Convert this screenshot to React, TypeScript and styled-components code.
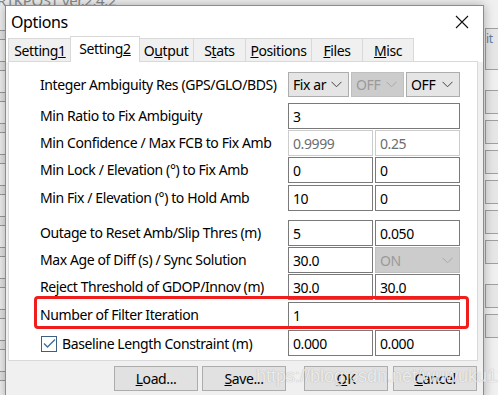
import styled, { createGlobalStyle, css } from "styled-components";

const GlobalStyle = createGlobalStyle`
  html, body {
    margin: 0;
    padding: 0;
  }
  body {
    width: 498px;
    height: 395px;
    overflow: hidden;
    background: #f0f0f0;
    font-family: "Noto Sans", "Open Sans", sans-serif;
    letter-spacing: -0.4px;
  }
`;

const Chevron = ({ color = "#444" }: { color?: string }) => (
    <svg width="11" height="7" viewBox="0 0 11 7">
        <path d="M0.5 0.8 L5.5 5.8 L10.5 0.8" fill="none" stroke={color} strokeWidth="1"/>
    </svg>
);

const tabs = [
    {label: "Setting", key: "1", after: "", w: 64},
    {label: "Setting", key: "2", after: "", w: 68, active: true},
    {label: "O", key: "u", after: "tput", w: 56},
    {label: "S", key: "t", after: "ats", w: 53},
    {label: "", key: "P", after: "ositions", w: 67},
    {label: "", key: "F", after: "iles", w: 52},
    {label: "", key: "M", after: "isc", w: 52},
];

export default function App() {
    return (
        <Desktop>
            <GlobalStyle/>
            <ParentTitle>RTKPOST ver.2.4.2</ParentTitle>
            <RightStrip>
                <StripBox $h={40}>it</StripBox>
                <StripBox $h={22} $mt={14}/>
                <StripBox $h={22}/>
                <StripBox $h={22}/>
                <StripBox $h={22}/>
                <StripBox $h={22}/>
                <StripBox $h={22}/>
                <StripBox $h={22} $mt={14}/>
                <StripBox $h={22}/>
            </RightStrip>
            <LeftStrip>
                {Array.from({length: 12}).map((_, i) => <LeftMark key={i}/>)}
            </LeftStrip>

            <Dialog>
                <TitleBar>
                    <Title>Options</Title>
                    <svg width="14" height="14" viewBox="0 0 14 14">
                        <path d="M1 1 L13 13 M13 1 L1 13" stroke="#111" strokeWidth="1.1"/>
                    </svg>
                </TitleBar>
                <TabStrip>
                    {tabs.map((t, i) => (
                        <Tab key={i} $w={t.w} $active={!!t.active}>
                            {t.label}<u>{t.key}</u>{t.after}
                        </Tab>
                    ))}
                </TabStrip>
                <PanelWrap>
                    <Panel>
                        <Row>
                            <Label>Integer Ambiguity Res (GPS/GLO/BDS)</Label>
                            <Controls>
                                <Select $w={61}>Fix ar<Chevron/></Select>
                                <Select $w={53} $disabled>OFF<Chevron color="#a8a8a8"/></Select>
                                <Select $w={54}>OFF<Chevron/></Select>
                            </Controls>
                        </Row>
                        <Row $mt={4}>
                            <Label>Min Ratio to Fix Ambiguity</Label>
                            <Controls>
                                <Field $w={172} defaultValue="3" readOnly/>
                            </Controls>
                        </Row>
                        <Row>
                            <Label>Min Confidence / Max FCB to Fix Amb</Label>
                            <Controls>
                                <Field $disabled defaultValue="0.9999" readOnly/>
                                <Field $disabled defaultValue="0.25" readOnly/>
                            </Controls>
                        </Row>
                        <Row>
                            <Label>Min Lock / Elevation (°) to Fix Amb</Label>
                            <Controls>
                                <Field defaultValue="0" readOnly/>
                                <Field defaultValue="0" readOnly/>
                            </Controls>
                        </Row>
                        <Row $mt={1}>
                            <Label>Min Fix / Elevation (°) to Hold Amb</Label>
                            <Controls>
                                <Field defaultValue="10" readOnly/>
                                <Field defaultValue="0" readOnly/>
                            </Controls>
                        </Row>
                        <Row $mt={8}>
                            <Label>Outage to Reset Amb/Slip Thres (m)</Label>
                            <Controls>
                                <Field defaultValue="5" readOnly/>
                                <Field defaultValue="0.050" readOnly/>
                            </Controls>
                        </Row>
                        <Row>
                            <Label>Max Age of Diff (s) / Sync Solution</Label>
                            <Controls>
                                <Field defaultValue="30.0" readOnly/>
                                <Select $w={85} $h={26} $disabled>ON<Chevron color="#a8a8a8"/></Select>
                            </Controls>
                        </Row>
                        <Row>
                            <Label>Reject Threshold of GDOP/Innov (m)</Label>
                            <Controls>
                                <Field defaultValue="30.0" readOnly/>
                                <Field defaultValue="30.0" readOnly/>
                            </Controls>
                        </Row>
                        <Row $mt={1} $marked>
                            <Label>Number of Filter Iteration</Label>
                            <Controls>
                                <Field $w={172} defaultValue="1" readOnly/>
                            </Controls>
                        </Row>
                        <Row $mt={1}>
                            <CheckLabel>
                                <CheckBox>
                                    <svg width="13" height="11" viewBox="0 0 13 11">
                                        <path d="M1 5.5 L4.5 9 L12 1.5" fill="none" stroke="#3f6f9f" strokeWidth="1.4"/>
                                    </svg>
                                </CheckBox>
                                Baseline Length Constraint (m)
                            </CheckLabel>
                            <Controls>
                                <Field defaultValue="0.000" readOnly/>
                                <Field defaultValue="0.000" readOnly/>
                            </Controls>
                        </Row>
                    </Panel>
                </PanelWrap>
                <Footer>
                    <Button><u>L</u>oad...</Button>
                    <Button $ml={4}><u>S</u>ave...</Button>
                    <Button $ml={18}><u>O</u>K</Button>
                    <Button $ml={5}><u>C</u>ancel</Button>
                </Footer>
            </Dialog>

            <Watermark>https://blog.csdn.net/wuwuku123</Watermark>
        </Desktop>
    );
}

const Desktop = styled.div`
    position: relative;
    width: 498px;
    height: 395px;
    overflow: hidden;
    background: #f0f0f0;
`;

const ParentTitle = styled.div`
    position: absolute;
    top: -10px;
    left: -3px;
    font-size: 15px;
    color: #8a8a8a;
`;

const RightStrip = styled.div`
    position: absolute;
    top: 28px;
    left: 485px;
    width: 13px;
    display: flex;
    flex-direction: column;
    gap: 6px;
`;

const StripBox = styled.div<{ $h: number; $mt?: number }>`
    height: ${p => p.$h}px;
    margin-top: ${p => p.$mt ?? 0}px;
    border: 1px solid #a0a0a0;
    border-right: none;
    background: #e6e6e6;
    font-size: 12px;
    color: #6a7a9a;
    line-height: 20px;
    overflow: hidden;
`;

const LeftStrip = styled.div`
    position: absolute;
    top: 30px;
    left: 0;
    width: 5px;
    display: flex;
    flex-direction: column;
    gap: 21px;
`;

const LeftMark = styled.div`
    height: 8px;
    border-top: 1px solid #9a9a9a;
    border-bottom: 1px solid #9a9a9a;
    background: #e4e4e4;
`;

const Dialog = styled.div`
    position: absolute;
    left: 5px;
    top: 5px;
    width: 479px;
    height: 395px;
    box-sizing: border-box;
    border: 1px solid #8c8c8c;
    background: #ffffff;
    box-shadow: 0 0 10px rgba(0, 0, 0, 0.3);
    display: flex;
    flex-direction: column;
`;

const TitleBar = styled.div`
    height: 31px;
    display: flex;
    align-items: center;
    justify-content: space-between;
    padding: 0 14px 0 5px;
`;

const Title = styled.span`
    font-size: 16px;
    color: #000;
`;

const TabStrip = styled.div`
    height: 25px;
    display: flex;
    align-items: flex-end;
    padding-left: 2px;
`;

const Tab = styled.div<{ $w: number; $active: boolean }>`
    box-sizing: border-box;
    width: ${p => p.$w}px;
    height: 24px;
    border: 1px solid #d9d9d9;
    border-bottom: none;
    margin-left: -1px;
    background: #f0f0f0;
    font-size: 14px;
    color: #000;
    display: flex;
    align-items: center;
    justify-content: center;

    &:first-child {
        margin-left: 0;
    }

    ${p => p.$active && css`
        height: 26px;
        width: ${p.$w + 2}px;
        margin-left: -2px;
        margin-right: -1px;
        background: #ffffff;
        position: relative;
        z-index: 1;
        padding-bottom: 3px;
    `}
`;

const PanelWrap = styled.div`
    background: #f0f0f0;
    padding: 0 5px 0 2px;
`;

const Panel = styled.div`
    height: 300px;
    box-sizing: border-box;
    border: 1px solid #d9d9d9;
    margin-top: -1px;
    background: #ffffff;
    padding: 10px 0 0 31px;
`;

const Row = styled.div<{ $mt?: number; $marked?: boolean }>`
    position: relative;
    display: grid;
    grid-template-columns: 248px 172px;
    width: 420px;
    height: 27px;
    margin-top: ${p => p.$mt ?? 0}px;

    ${p => p.$marked && css`
        &::after {
            content: "";
            position: absolute;
            top: -6px;
            left: -6px;
            right: -9px;
            bottom: 0;
            border: 3px solid #f01d1d;
            border-radius: 4px;
            pointer-events: none;
        }
    `}
`;

const Label = styled.div`
    font-size: 14px;
    color: #000;
    line-height: 26px;
    white-space: nowrap;
`;

const CheckLabel = styled(Label)`
    display: flex;
    align-items: center;
    gap: 5px;
    margin-left: 1px;
`;

const CheckBox = styled.div`
    box-sizing: border-box;
    width: 16px;
    height: 16px;
    border: 1px solid #3d5f82;
    background: #ffffff;
    display: flex;
    align-items: center;
    justify-content: center;
`;

const Controls = styled.div`
    display: flex;
    gap: 2px;
    align-items: flex-start;
`;

const Field = styled.input<{ $w?: number; $disabled?: boolean }>`
    box-sizing: border-box;
    width: ${p => p.$w ?? 85}px;
    height: 26px;
    border: 1px solid ${p => p.$disabled ? "#cccccc" : "#7a7a7a"};
    background: #ffffff;
    padding: 0 4px;
    font-family: "Noto Sans", "Open Sans", sans-serif;
    font-size: 14px;
    letter-spacing: -0.4px;
    color: ${p => p.$disabled ? "#6d6d6d" : "#000"};
    outline: none;
`;

const Select = styled.div<{ $w: number; $h?: number; $disabled?: boolean }>`
    box-sizing: border-box;
    width: ${p => p.$w}px;
    height: ${p => p.$h ?? 25}px;
    border: 1px solid ${p => p.$disabled ? "#bfbfbf" : "#adadad"};
    background: ${p => p.$disabled ? "#cccccc" : "#e5e5e5"};
    color: ${p => p.$disabled ? "#9a9a9a" : "#000"};
    font-size: 14px;
    display: flex;
    align-items: center;
    justify-content: space-between;
    padding: 0 6px 0 4px;
    white-space: nowrap;
    overflow: hidden;
`;

const Footer = styled.div`
    flex: 1;
    background: #f0f0f0;
    display: flex;
    align-items: flex-start;
    padding: 5px 0 0 108px;
`;

const Button = styled.div<{ $ml?: number }>`
    box-sizing: border-box;
    width: 84px;
    height: 25px;
    margin-left: ${p => p.$ml ?? 0}px;
    border: 1px solid #adadad;
    background: #e1e1e1;
    font-size: 14px;
    color: #000;
    display: flex;
    align-items: center;
    justify-content: center;
`;

const Watermark = styled.div`
    position: absolute;
    left: 256px;
    top: 366px;
    font-family: "Liberation Sans", Arial, sans-serif;
    font-size: 18px;
    letter-spacing: 0;
    color: rgba(255, 255, 255, 0.8);
    text-shadow: 0 0 1px rgba(90, 90, 90, 0.5);
    white-space: nowrap;
    pointer-events: none;
`;
